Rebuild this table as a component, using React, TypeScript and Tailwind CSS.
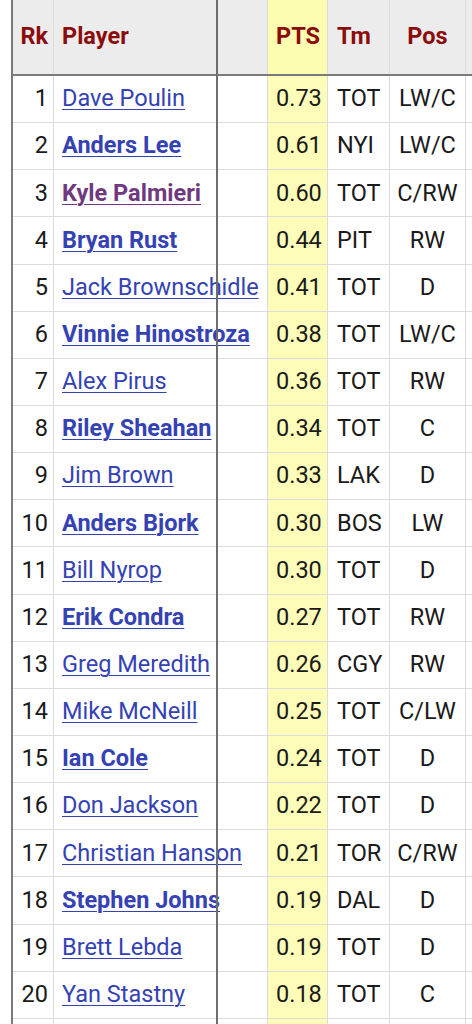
type Row = {
  rk: number;
  name: string;
  pts: string;
  tm: string;
  pos: string;
  bold?: boolean;
  visited?: boolean;
};

const rows: Row[] = [
  { rk: 1, name: 'Dave Poulin', pts: '0.73', tm: 'TOT', pos: 'LW/C' },
  { rk: 2, name: 'Anders Lee', pts: '0.61', tm: 'NYI', pos: 'LW/C', bold: true },
  { rk: 3, name: 'Kyle Palmieri', pts: '0.60', tm: 'TOT', pos: 'C/RW', bold: true, visited: true },
  { rk: 4, name: 'Bryan Rust', pts: '0.44', tm: 'PIT', pos: 'RW', bold: true },
  { rk: 5, name: 'Jack Brownschidle', pts: '0.41', tm: 'TOT', pos: 'D' },
  { rk: 6, name: 'Vinnie Hinostroza', pts: '0.38', tm: 'TOT', pos: 'LW/C', bold: true },
  { rk: 7, name: 'Alex Pirus', pts: '0.36', tm: 'TOT', pos: 'RW' },
  { rk: 8, name: 'Riley Sheahan', pts: '0.34', tm: 'TOT', pos: 'C', bold: true },
  { rk: 9, name: 'Jim Brown', pts: '0.33', tm: 'LAK', pos: 'D' },
  { rk: 10, name: 'Anders Bjork', pts: '0.30', tm: 'BOS', pos: 'LW', bold: true },
  { rk: 11, name: 'Bill Nyrop', pts: '0.30', tm: 'TOT', pos: 'D' },
  { rk: 12, name: 'Erik Condra', pts: '0.27', tm: 'TOT', pos: 'RW', bold: true },
  { rk: 13, name: 'Greg Meredith', pts: '0.26', tm: 'CGY', pos: 'RW' },
  { rk: 14, name: 'Mike McNeill', pts: '0.25', tm: 'TOT', pos: 'C/LW' },
  { rk: 15, name: 'Ian Cole', pts: '0.24', tm: 'TOT', pos: 'D', bold: true },
  { rk: 16, name: 'Don Jackson', pts: '0.22', tm: 'TOT', pos: 'D' },
  { rk: 17, name: 'Christian Hanson', pts: '0.21', tm: 'TOR', pos: 'C/RW' },
  { rk: 18, name: 'Stephen Johns', pts: '0.19', tm: 'DAL', pos: 'D', bold: true },
  { rk: 19, name: 'Brett Lebda', pts: '0.19', tm: 'TOT', pos: 'D' },
  { rk: 20, name: 'Yan Stastny', pts: '0.18', tm: 'TOT', pos: 'C' },
];

const grid = 'grid grid-cols-[41px_214px_60px_62px_76px_60px]';

export default function App() {
  return (
    <div className="relative h-[1024px] w-[472px] overflow-hidden bg-white font-['Roboto',sans-serif] text-[23.5px] leading-none text-[#1a1a1a]">
      <div className="ml-[11px] w-[600px] border-l-2 border-[#7a7a7a]">
        <div className={`${grid} h-[76px] border-b-2 border-[#7a7a7a] bg-[#ececec] font-bold text-[#8c0c0c]`}>
          <div className="flex items-center justify-end border-r border-[#dcdcdc] pr-[5px]">Rk</div>
          <div className="flex items-center border-r border-[#dcdcdc] pl-[8px]">Player</div>
          <div className="flex items-center border-r border-[#dcdcdc] bg-[#fdfdb2] pl-[8px]">PTS</div>
          <div className="flex items-center border-r border-[#dcdcdc] pl-[9px]">Tm</div>
          <div className="flex items-center justify-center border-r border-[#dcdcdc]">Pos</div>
          <div />
        </div>
        {rows.map((r) => (
          <div key={r.rk} className={`${grid} h-[47.15px] border-b border-[#dcdcdc]`}>
            <div className="flex items-center justify-end border-r border-[#dcdcdc] pr-[5px]">{r.rk}</div>
            <div className="flex items-center overflow-hidden whitespace-nowrap border-r border-[#dcdcdc] pl-[8px]">
              <a
                href="#"
                className={`underline decoration-1 underline-offset-[3px] ${r.bold ? 'font-bold' : ''} ${
                  r.visited ? 'text-[#70397f]' : 'text-[#3442b4]'
                }`}
              >
                {r.name}
              </a>
            </div>
            <div className="flex items-center border-r border-[#dcdcdc] bg-[#fdfdb9] pl-[8px]">{r.pts}</div>
            <div className="flex items-center border-r border-[#dcdcdc] pl-[9px]">{r.tm}</div>
            <div className="flex items-center justify-center border-r border-[#dcdcdc]">{r.pos}</div>
            <div />
          </div>
        ))}
        <div className={`${grid} h-[47px]`}>
          <div className="border-r border-[#dcdcdc]" />
          <div className="border-r border-[#dcdcdc]" />
          <div className="border-r border-[#dcdcdc] bg-[#fdfdb9]" />
          <div className="border-r border-[#dcdcdc]" />
          <div className="border-r border-[#dcdcdc]" />
          <div />
        </div>
      </div>
      <div className="pointer-events-none absolute top-0 left-[216px] h-full w-[2px] bg-[#6e6e6e]" />
    </div>
  );
}
